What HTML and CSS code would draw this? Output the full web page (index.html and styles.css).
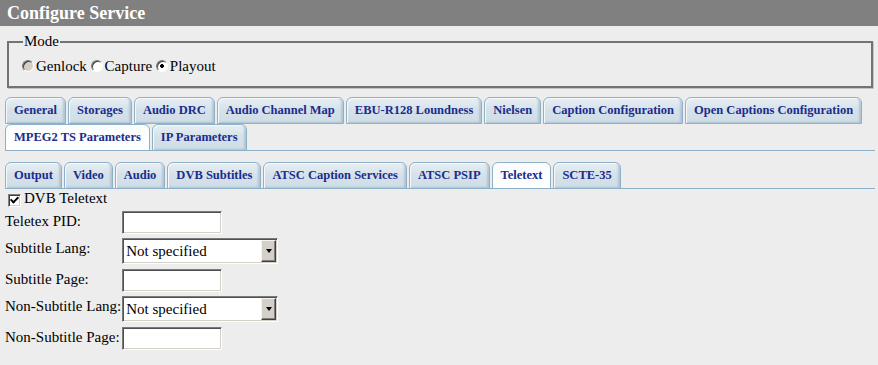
FILE: index.html
```html
<!DOCTYPE html>
<html>
	<head>
		<meta charset="UTF-8">
		<title>Configure Service</title>
		<link rel="stylesheet" href="styles.css">
	</head>
	<body>
		<div class="title-bar">Configure Service</div>
		<div class="content">
			<fieldset class="mode">
				<legend>Mode</legend>
				<label><input type="radio" name="mode" disabled>Genlock</label>
				<label><input type="radio" name="mode">Capture</label>
				<label><input type="radio" name="mode" checked>Playout</label>
			</fieldset>
			<div class="tabs">
				<ul class="tab-nav">
					<li>General</li>
					<li>Storages</li>
					<li>Audio DRC</li>
					<li>Audio Channel Map</li>
					<li>EBU-R128 Loundness</li>
					<li>Nielsen</li>
					<li>Caption Configuration</li>
					<li>Open Captions Configuration</li>
					<li class="current">MPEG2 TS Parameters</li>
					<li>IP Parameters</li>
				</ul>
				<div class="tab-panel">
					<div class="tabs">
						<ul class="tab-nav">
							<li>Output</li>
							<li>Video</li>
							<li>Audio</li>
							<li>DVB Subtitles</li>
							<li>ATSC Caption Services</li>
							<li>ATSC PSIP</li>
							<li class="current">Teletext</li>
							<li>SCTE-35</li>
						</ul>
						<div class="teletext">
							<label class="check"><input type="checkbox" checked>DVB Teletext</label>
							<div class="form-grid">
								<label>Teletex PID:</label>
								<input type="text">
								<label>Subtitle Lang:</label>
								<span class="select"><select><option>Not specified</option></select></span>
								<label>Subtitle Page:</label>
								<input type="text">
								<label>Non-Subtitle Lang:</label>
								<span class="select"><select><option>Not specified</option></select></span>
								<label>Non-Subtitle Page:</label>
								<input type="text">
							</div>
						</div>
					</div>
				</div>
			</div>
		</div>
	</body>
</html>
```

FILE: styles.css
```css
*{
	margin: 0;
	padding: 0;
}
body{
	background: #ededed;
	font-family: "Liberation Serif", "Times New Roman", serif;
	font-size: 15px;
	color: #000;
}
.title-bar{
	height: 26px;
	line-height: 26px;
	padding-left: 7px;
	background: #808080;
	color: #fff;
	font-size: 18px;
	font-weight: 700;
}
.content{
	padding: 0 3px 0 5px;
}
.mode{
	margin: 7px 2px 9px;
	padding: 8px 11px 11px 13px;
	border: 2px solid #737373;
	box-shadow: 1px 1px 0 #c4c4c4;
	line-height: 17px;
}
.mode legend{
	padding: 0 1px;
	margin-left: 1px;
}
.mode input{
	appearance: none;
	-webkit-appearance: none;
	width: 12px;
	height: 12px;
	border-radius: 50%;
	border: 1px solid;
	border-color: #7b7b7b #fff #fff #7b7b7b;
	box-shadow: inset 1px 1px 0 #3c3c3c;
	background: #fff;
	margin: 0 2px 0 0;
	vertical-align: -1px;
}
.mode input:disabled{
	background: #d4d0c8;
}
.mode input:checked{
	background: radial-gradient(circle, #000 0, #000 1.6px, #fff 2.2px);
}

/* tabs */
.tab-nav{
	list-style: none;
	display: flex;
	flex-wrap: wrap;
	column-gap: 2px;
	row-gap: 1px;
	border-bottom: 1px solid #8db1c8;
}
.tab-nav li{
	height: 27px;
	box-sizing: border-box;
	margin-bottom: -1px;
	padding: 5px 8px 0;
	line-height: 15px;
	font-size: 12.5px;
	font-weight: 700;
	color: #1b2c8c;
	white-space: nowrap;
	border: 1px solid #8db1c8;
	border-radius: 6px 6px 0 0;
	background: linear-gradient(to bottom, #e8eff3 0%, #d6e2ea 45%, #cfdde6 100%);
	box-shadow: inset 1px 1px 0 #f6f9fb, inset -2px -1px 2px rgba(110,145,170,.35);
	cursor: pointer;
}
.tab-nav li.current{
	background: linear-gradient(to bottom, #fafcfd 0%, #fff 100%);
	box-shadow: none;
}
.tab-panel{
	padding-top: 11px;
}

/* teletext form */
.teletext{
	padding-top: 1px;
	line-height: 17px;
}
.check input{
	appearance: none;
	-webkit-appearance: none;
	width: 13px;
	height: 13px;
	box-sizing: border-box;
	border: 1px solid;
	border-color: #808080 #fff #fff #808080;
	box-shadow: inset 1px 1px 0 #404040, inset -1px -1px 0 #d4d0c8;
	background: #fff;
	margin: 0 3px 0 3px;
	vertical-align: -1px;
	display: inline-grid;
	place-content: center;
}
.check input:checked::after{
	content: "";
	width: 3px;
	height: 6px;
	border-right: 2px solid #000;
	border-bottom: 2px solid #000;
	transform: translate(0, -1px) rotate(45deg);
}
.form-grid{
	display: grid;
	grid-template-columns: max-content max-content;
	column-gap: 1px;
	row-gap: 4px;
	align-items: start;
	margin-top: 4px;
}
.form-grid label{
	padding-top: 2px;
}
.form-grid input,
.form-grid select{
	box-sizing: border-box;
	border: 1px solid;
	border-color: #7a7a7a #fff #fff #7a7a7a;
	box-shadow: inset 1px 1px 0 #505050, inset -1px -1px 0 #d4d0c8;
	background: #fff;
	font-family: "Liberation Serif", "Times New Roman", serif;
	font-size: 15px;
	outline: none;
}
.form-grid input{
	width: 100px;
	height: 23px;
	padding: 0 3px;
}
.select{
	position: relative;
	display: inline-block;
	width: 156px;
	height: 26px;
	margin-bottom: 1px;
}
.select select{
	appearance: none;
	-webkit-appearance: none;
	width: 156px;
	height: 26px;
	padding: 0 18px 0 3px;
	color: #000;
}
.select::after{
	content: "";
	position: absolute;
	top: 2px;
	right: 2px;
	width: 15px;
	height: 22px;
	box-sizing: border-box;
	background: #d4d0c8;
	border: 1px solid;
	border-color: #f4f4f4 #404040 #404040 #f4f4f4;
	box-shadow: inset -1px -1px 0 #808080;
	pointer-events: none;
}
.select::before{
	content: "";
	position: absolute;
	top: 11px;
	right: 6px;
	border-top: 4px solid #000;
	border-left: 3.5px solid transparent;
	border-right: 3.5px solid transparent;
	z-index: 1;
	pointer-events: none;
}
```
